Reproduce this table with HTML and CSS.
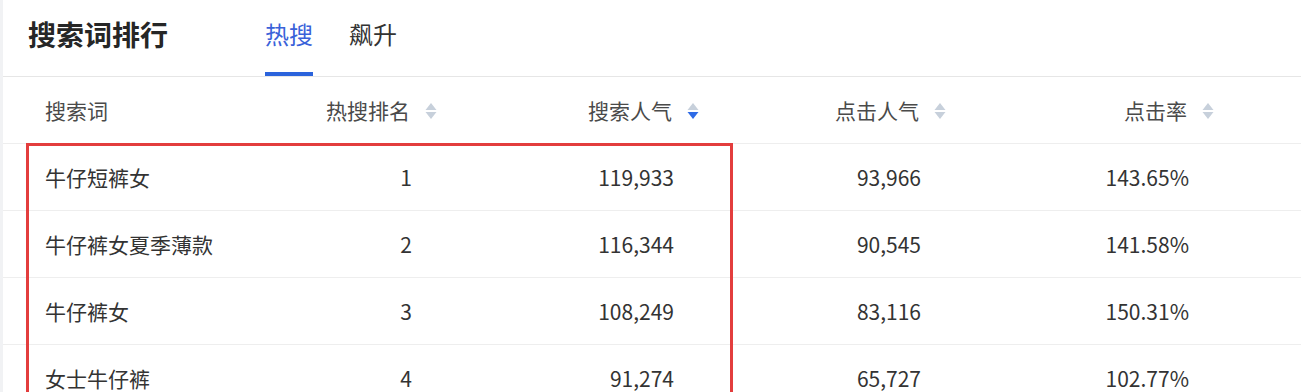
FILE: index.html
```html
<!DOCTYPE html>
<html lang="zh-CN">
<head>
<meta charset="utf-8">
<title>搜索词排行</title>
<link rel="stylesheet" href="styles.css">
</head>
<body>
<div class="card">
  <div class="head">
    <div class="title">搜索词排行</div>
    <div class="tabs">
      <div class="tab active">热搜</div>
      <div class="tab">飙升</div>
    </div>
  </div>
  <div class="table">
    <div class="row thead">
      <div class="cell first">搜索词</div>
      <div class="cell num">热搜排名<svg class="sort" viewBox="0 0 12 18" width="12" height="18"><path class="up" d="M0.5 8 L6 1 L11.5 8 Z"/><path class="down" d="M0.5 10 L6 17 L11.5 10 Z"/></svg></div>
      <div class="cell num">搜索人气<svg class="sort" viewBox="0 0 12 18" width="12" height="18"><path class="up" d="M0.5 8 L6 1 L11.5 8 Z"/><path class="down on" d="M0.5 10 L6 17 L11.5 10 Z"/></svg></div>
      <div class="cell num">点击人气<svg class="sort" viewBox="0 0 12 18" width="12" height="18"><path class="up" d="M0.5 8 L6 1 L11.5 8 Z"/><path class="down" d="M0.5 10 L6 17 L11.5 10 Z"/></svg></div>
      <div class="cell num last">点击率<svg class="sort" viewBox="0 0 12 18" width="12" height="18"><path class="up" d="M0.5 8 L6 1 L11.5 8 Z"/><path class="down" d="M0.5 10 L6 17 L11.5 10 Z"/></svg></div>
    </div>
    <div class="row">
      <div class="cell first">牛仔短裤女</div>
      <div class="cell num">1</div>
      <div class="cell num">119,933</div>
      <div class="cell num">93,966</div>
      <div class="cell num last">143.65%</div>
    </div>
    <div class="row">
      <div class="cell first">牛仔裤女夏季薄款</div>
      <div class="cell num">2</div>
      <div class="cell num">116,344</div>
      <div class="cell num">90,545</div>
      <div class="cell num last">141.58%</div>
    </div>
    <div class="row">
      <div class="cell first">牛仔裤女</div>
      <div class="cell num">3</div>
      <div class="cell num">108,249</div>
      <div class="cell num">83,116</div>
      <div class="cell num last">150.31%</div>
    </div>
    <div class="row">
      <div class="cell first">女士牛仔裤</div>
      <div class="cell num">4</div>
      <div class="cell num">91,274</div>
      <div class="cell num">65,727</div>
      <div class="cell num last">102.77%</div>
    </div>
    <div class="highlight"></div>
  </div>
</div>
</body>
</html>
```
FILE: styles.css
```css
html, body {
  margin: 0;
  padding: 0;
}
body {
  background: #f1f2f4;
  font-family: "Noto Sans CJK SC", "Noto Sans", sans-serif;
  color: #333;
  width: 1301px;
  height: 392px;
  overflow: hidden;
}
.card {
  margin-left: 3px;
  background: #fff;
  height: 392px;
  overflow: hidden;
}
.head {
  display: flex;
  height: 77px;
  box-sizing: border-box;
  border-bottom: 1px solid #e6e6e6;
  padding-left: 25px;
}
.title {
  font-size: 28px;
  font-weight: 700;
  color: #262626;
  line-height: 68px;
}
.tabs {
  display: flex;
  gap: 36px;
  margin-left: 97px;
}
.tab {
  font-size: 24px;
  color: #333;
  height: 76px;
  box-sizing: border-box;
  padding-bottom: 6px;
  border-bottom: 4px solid transparent;
  display: flex;
  align-items: center;
}
.tab.active {
  color: #3a62d9;
  border-bottom-color: #2b63dc;
}
.table {
  position: relative;
}
.row {
  display: grid;
  grid-template-columns: 247px 210px 262px 247px 1fr;
  height: 67px;
  box-sizing: border-box;
  border-bottom: 1px solid #eeeeee;
  font-size: 21px;
  color: #333;
}
.cell {
  display: flex;
  align-items: center;
  justify-content: flex-end;
  padding-right: 48px;
}
.cell.first {
  justify-content: flex-start;
  padding-left: 42px;
  padding-right: 0;
}
.cell.last {
  padding-right: 112px;
}
.thead {
  color: #4a4a4a;
}
.thead .cell {
  padding-right: 23px;
}
.thead .cell.first {
  padding-right: 0;
}
.thead .cell.last {
  padding-right: 87px;
}
.sort {
  flex: none;
  margin-left: 15px;
  margin-top: 1px;
}
.sort path {
  fill: #c7d0db;
}
.sort path.on {
  fill: #2f6be6;
}
.highlight {
  position: absolute;
  left: 23px;
  top: 66px;
  width: 707px;
  height: 300px;
  box-sizing: border-box;
  border: 3px solid #e33d3d;
}
```
